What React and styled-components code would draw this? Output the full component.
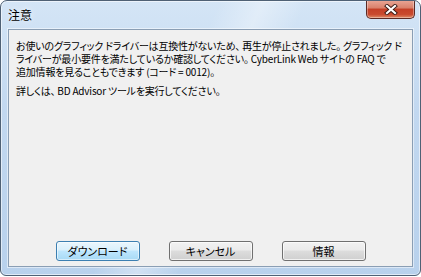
import React from "react";
import styled, { createGlobalStyle } from "styled-components";

const Global = createGlobalStyle`
  html, body { margin: 0; padding: 0; background: #ffffff; }
  body { font-family: "Noto Sans CJK JP", "Noto Sans", sans-serif; }
`;

const Window = styled.div`
  box-sizing: border-box;
  width: 421px;
  height: 276px;
  border: 1px solid #4f6175;
  border-radius: 7px 7px 6px 6px;
  background:
    linear-gradient(115deg, rgba(255,255,255,0) 0%, rgba(255,255,255,0) 40%, rgba(255,255,255,0.35) 48%, rgba(255,255,255,0) 56%, rgba(255,255,255,0) 100%),
    linear-gradient(180deg, #d4e5f6 0%, #c2d8f0 40%, #b8d1ec 100%);
  box-shadow: inset 0 0 0 1px rgba(255,255,255,0.55);
  display: flex;
  flex-direction: column;
  padding: 0 7px 8px 7px;
  overflow: hidden;
`;

const TitleBar = styled.div`
  height: 28px;
  display: flex;
  align-items: flex-start;
  justify-content: space-between;
`;

const Title = styled.div`
  font-size: 12px;
  line-height: 12px;
  color: #000;
  margin-top: 8px;
  text-shadow: 0 0 6px rgba(255,255,255,0.9);
`;

const CloseButton = styled.div`
  width: 49px;
  height: 19px;
  margin-top: -1px;
  margin-right: -2px;
  box-sizing: border-box;
  border: 1px solid #5c2a24;
  border-top: none;
  border-radius: 0 0 5px 5px;
  background: linear-gradient(180deg, #eaa898 0%, #d9806a 45%, #c43f26 50%, #c94a2e 80%, #de8a66 100%);
  box-shadow: inset 0 0 0 1px rgba(255,255,255,0.35);
  display: flex;
  align-items: center;
  justify-content: center;
`;

const Client = styled.div`
  flex: 1;
  background: #f0f0f0;
  border: 1px solid #8a9eb4;
  box-shadow: 0 0 0 1px rgba(255,255,255,0.5);
  display: flex;
  flex-direction: column;
  padding: 9px 7px 4px 7px;
  font-size: 10px;
  letter-spacing: -0.2px;
  color: #000;
  font-feature-settings: "palt";
`;

const Paragraph = styled.div`
  margin-bottom: ${(p) => p.$gap || 0}px;
`;

const Line = styled.div`
  line-height: 13px;
  height: 13px;
  white-space: nowrap;
`;

const ButtonRow = styled.div`
  margin-top: auto;
  display: flex;
  justify-content: center;
  gap: 29px;
`;

const Button = styled.div`
  box-sizing: border-box;
  width: 84px;
  height: 20px;
  margin-bottom: 1px;
  border: 1px solid ${(p) => (p.$default ? "#3c7fb1" : "#707070")};
  border-radius: 3px;
  background: ${(p) =>
    p.$default
      ? "linear-gradient(180deg, #eaf6fd 0%, #d9f0fc 45%, #bee6fd 50%, #a7d9f5 100%)"
      : "linear-gradient(180deg, #f2f2f2 0%, #ebebeb 45%, #dddddd 50%, #cfcfcf 100%)"};
  box-shadow: inset 0 0 0 1px ${(p) => (p.$default ? "rgba(255,255,255,0.55)" : "rgba(255,255,255,0.7)")};
  display: flex;
  align-items: center;
  justify-content: center;
  font-size: 11px;
  letter-spacing: 0;
  line-height: 1;
  color: #000;
`;

const CloseIcon = () => (
  <svg width="14" height="11" viewBox="0 0 14 11">
    <path d="M3 2 L11 9 M11 2 L3 9" stroke="#3b1a14" strokeWidth="4" strokeLinecap="square" />
    <path d="M3 2 L11 9 M11 2 L3 9" stroke="#ffffff" strokeWidth="2.2" strokeLinecap="square" />
  </svg>
);

export default function App() {
  return (
    <>
      <Global />
      <Window>
        <TitleBar>
          <Title>注意</Title>
          <CloseButton>
            <CloseIcon />
          </CloseButton>
        </TitleBar>
        <Client>
          <Paragraph $gap={6}>
            <Line>お使いのグラフィック ドライバーは互換性がないため、 再生が停止されました。 グラフィック ド</Line>
            <Line>ライバーが最小要件を満たしているか確認してください。 CyberLink Web サイトの FAQ で</Line>
            <Line>追加情報を見ることもできます (コード = 0012)。</Line>
          </Paragraph>
          <Paragraph>
            <Line>詳しくは、 BD Advisor ツールを実行してください。</Line>
          </Paragraph>
          <ButtonRow>
            <Button $default>ダウンロード</Button>
            <Button>キャンセル</Button>
            <Button>情報</Button>
          </ButtonRow>
        </Client>
      </Window>
    </>
  );
}
